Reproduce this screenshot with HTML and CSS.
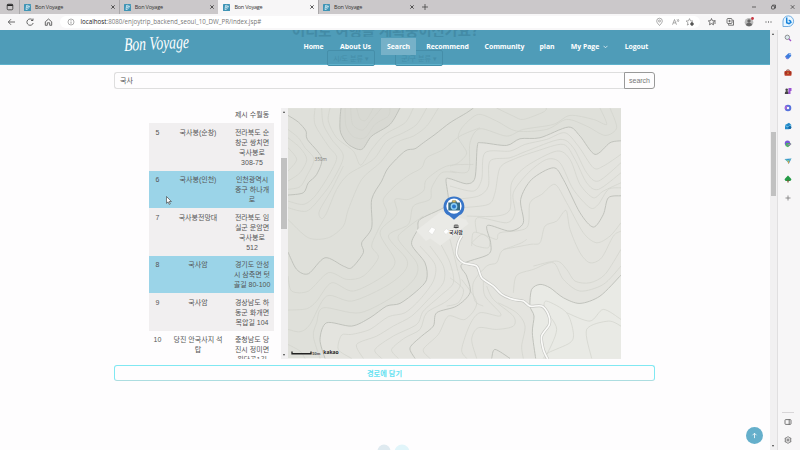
FILE: index.html
```html
<!DOCTYPE html>
<html lang="ko">
<head>
<meta charset="utf-8">
<title>Bon Voyage</title>
<link rel="stylesheet" href="styles.css">
</head>
<body>
<svg width="0" height="0" class="defs">
  <symbol id="fav" viewBox="0 0 7 7"><rect width="7" height="7" rx=".6" fill="#3f94b5"/><path d="M2.6 1.2 2 5.7M2.6 1.5C4.6.7 4.6 3 2.6 3.3 5 3 4.7 5.8 2 5.5M4.4 1.5 4.9 3.5 5.8 1.7" fill="none" stroke="#e4f4fa" stroke-width=".7"/></symbol>
  <symbol id="close" viewBox="0 0 6 6"><path d="m1.3 1.3 3.4 3.4m0-3.4L1.3 4.7" stroke="#333" stroke-width=".8"/></symbol>
</svg>
<div class="tabs">
  <svg class="workspaces" viewBox="0 0 8 8"><rect x="1.2" y="1.2" width="5.6" height="5.6" rx="1" fill="none" stroke="#333" stroke-width=".8"/><path d="M1.2 2.2h5.6" stroke="#222" stroke-width="1.6"/></svg>
  <div class="tab"><svg class="fav"><use href="#fav"/></svg><span>Bon Voyage</span><svg class="close"><use href="#close"/></svg></div>
  <div class="tab"><svg class="fav"><use href="#fav"/></svg><span>Bon Voyage</span><svg class="close"><use href="#close"/></svg></div>
  <div class="tab active"><svg class="fav"><use href="#fav"/></svg><span>Bon Voyage</span><svg class="close"><use href="#close"/></svg></div>
  <div class="tab"><svg class="fav"><use href="#fav"/></svg><span>Bon Voyage</span><svg class="close"><use href="#close"/></svg></div>
  <svg class="newtab" viewBox="0 0 8 8"><path d="M4 1v6M1 4h6" stroke="#333" stroke-width=".7"/></svg>
  <svg class="winctl" viewBox="0 0 46 8" fill="none" stroke="#333" stroke-width=".7"><path d="M2 4h4"/><rect x="21.5" y="3" width="3" height="3" rx=".5"/><path d="M22.5 2.8v-.7h3v3h-.8"/><path d="m40.8 2.2 3.6 3.6m0-3.6-3.6 3.6"/></svg>
</div>
<div class="toolbar">
  <svg class="navicons" viewBox="0 0 50 12" fill="none" stroke="#444" stroke-width=".8"><path d="M9 6H2.5M5 3.2 2.3 6 5 8.800"/><path d="M26.700 4.200A3.200 3.200 0 1 0 27.200 7M27 2.500v2h-2"/><path d="M39.300 5.800 42.500 3l3.200 2.800v3.500h-2V6.800h-2.400v2.500h-2z"/></svg>
  <div class="address">
    <svg viewBox="0 0 8 8" class="info"><circle cx="4" cy="4" r="3" fill="none" stroke="#777" stroke-width=".6"/><path d="M4 3.500v2.200M4 2.200v.7" stroke="#777" stroke-width=".7"/></svg>
    <span class="url"><b>localhost</b>:8080/enjoytrip_backend_seoul_10_DW_PR/index.jsp#</span>
    <svg class="addricons" viewBox="0 0 42 10" fill="none" stroke="#888" stroke-width=".7"><path d="M6.500 8.500C4.500 6.300 3.700 5.200 3.700 4a2.800 2.800 0 0 1 5.600 0c0 1.200-.8 2.300-2.800 4.500z"/><circle cx="6.500" cy="4" r="1"/><path d="m19.500 7.700 2-5.200 2 5.200m-3.300-1.800h2.600M24 2.500q1 1 0 2M25 2q1.500 1.500 0 3"/><path d="m36.500 1.600 1 2.200 2.300.2-1.700 1.500M36.500 1.600l-1 2.200-2.400.2 1.800 1.600-.6 2.500 1.700-1"/><circle cx="39" cy="7" r="1.400" fill="#555" stroke="#555"/></svg>
  </div>
  <svg class="toolicons" viewBox="0 0 66 12" fill="none" stroke="#555" stroke-width=".8"><path d="m5.500 2.500.9 2.200 2.300.2-1.700 1.600.5 2.300-2-1.200-2 1.200.5-2.300-1.700-1.600 2.300-.2zM8 5h2M7.500 7h2.500"/><rect x="21" y="2.500" width="5" height="5" rx="1"/><path d="M22.500 8.200v1h5V4.300h-1M22.300 5h2.500m-1.200-1.200v2.500"/><circle cx="43" cy="6.300" r="4.300" fill="#bbb" stroke="none"/><circle cx="43" cy="5" r="1.700" fill="#666" stroke="none"/><path d="M40 9c0-3 6-3 6 0q-3 2.500-6 0" fill="#666" stroke="none"/><circle cx="46.500" cy="2.500" r="1.400" fill="#c63740" stroke="none"/><path d="M59.500 6h1M62 6h1M64.500 6h1" stroke="#333" stroke-width="1"/></svg>
</div>
<div class="shell">
  <main class="page">
    <header class="hero">
      <div class="logo">Bon Voyage</div>
      <nav class="menu">
        <a>Home</a><a>About Us</a><a class="on"><span>Search</span></a><a>Recommend</a><a>Community</a><a>plan</a><a>My Page <svg viewBox="0 0 5 4"><path d="m.5.8 2 2 2-2" fill="none" stroke="#fff" stroke-width=".7"/></svg></a><a>Logout</a>
      </nav>
      <div class="ghost-title">어디로 여행을 계획중이신가요?</div>
      <div class="ghost-selects"><span>시/도 분류 ▾</span><span>군/구 분류 ▾</span></div>
    </header>
    <form class="search"><div class="field">국사</div><div class="go">search</div></form>
    <section class="results">
      <div class="list">
        <div class="row first"><span></span><span></span><span>제시 수월동</span></div>
        <div class="row grey"><span>5</span><span>국사봉(순창)</span><span>전라북도 순<br>창군 쌍치면<br>국사봉로<br>308-75</span></div>
        <div class="row blue"><span>6</span><span>국사봉(인천)</span><span>인천광역시<br>중구 하나개<br>로</span></div>
        <div class="row grey"><span>7</span><span>국사봉전망대</span><span>전라북도 임<br>실군 운암면<br>국사봉로<br>512</span></div>
        <div class="row blue"><span>8</span><span>국사암</span><span>경기도 안성<br>시 삼죽면 텃<br>골길 80-100</span></div>
        <div class="row grey"><span>9</span><span>국사암</span><span>경상남도 하<br>동군 화개면<br>목압길 104</span></div>
        <div class="row"><span>10</span><span>당진 안국사지 석<br>탑</span><span>충청남도 당<br>진시 정미면<br>원당골1길</span></div>
      </div>
      <div class="bar listbar"><i class="up"></i><div class="thumb"></div><i class="down"></i></div>
      <svg class="map" viewBox="24 26 999 751">
        <rect x="24" y="26" width="999" height="751" fill="#dfe0da"/>
        <g id="areas"></g><g id="minor"></g><g id="major"></g>
        <path d="m408 394 75-58 75 25 8 12-85 66-30-22-13 8z" fill="#eaeae6"/>
        <g fill="#fff" stroke="#cfcfca"><path d="m445 396 10-13 12 6-10 17z"/><path d="m490 397 9-9 9 7-10 10z"/></g>
        <g id="road"></g>
        <path d="M507 348c-25-8-22-57 15-57s40 49 15 57l-15 13z" fill="#3976c9"/><circle cx="522" cy="320" r="23" fill="#fff"/>
        <path d="M505 309h9l3-6h11l3 6h9v24h-35z" fill="#356b85"/><path d="M517 303h10v6h-10z" fill="#d8b458"/><circle cx="522" cy="321" r="10" fill="#8fd0f5"/><circle cx="522" cy="321" r="6" fill="#2875c8"/>
        <path d="M523 377h11v7h-11zm-2 7h15M528 376v11" fill="none" stroke="#333" stroke-width="2"/>
        <text x="528" y="405" class="place">국사암</text>
        <text x="122" y="185" class="elev">350m</text>
        <path d="M36 756v7h57v-7" fill="none" stroke="#222" stroke-width="4"/>
        <text x="109" y="767" class="scale">50m</text><text x="153" y="765" class="brand">kakao</text>
      </svg>
    </section>
    <div class="add">경로에 담기</div>
    <div class="foot">
      <svg class="loader" viewBox="0 0 34 6"><circle cx="8" cy="7" r="6.500" fill="#dfeaf0"/><circle cx="26" cy="8" r="7.500" fill="#e1f5fa"/></svg>
      <div class="totop"><svg viewBox="0 0 8 8"><path d="M4 7V1.500M1.700 3.700 4 1.400l2.300 2.300" fill="none" stroke="#fff" stroke-width=".9"/></svg></div>
    </div>
  </main>
  <div class="bar pagebar"><i class="up"></i><div class="thumb"></div><i class="down"></i></div>
  <aside class="side">
    <svg class="bing" viewBox="0 0 14 14"><path d="M2 12.500V7a5.300 5.300 0 1 1 5.300 5.500z" fill="#e9f6ff" stroke="#62a4dc" stroke-width=".9"/><path d="M5.700 3.500v5.300L8 9.700l2-1.300c0-1.400-1.200-1.900-2.300-2.200" fill="none" stroke="#1683dc" stroke-width="1.500"/></svg>
    <svg viewBox="0 0 8 8"><circle cx="3.300" cy="3.300" r="2.200" fill="#dceaf2" stroke="#777" stroke-width=".8"/><path d="m5 5 2 2" stroke="#a14fc8" stroke-width="1.300"/></svg>
    <svg viewBox="0 0 8 8"><path d="m1 4.500 3.500-3.300 2.500.3.200 2.500L4 7.200z" fill="#3f7ddd"/><path d="m1 4.500 3 2.700-1.500-.2z" fill="#7953ce"/><circle cx="6" cy="2.500" r=".6" fill="#fff"/></svg>
    <svg viewBox="0 0 8 8"><path d="M2.800 2V1h2.400v1" fill="none" stroke="#7c3223" stroke-width=".8"/><rect x=".5" y="2" width="7" height="4.800" rx=".8" fill="#bd3b26"/><path d="M.5 4h7" stroke="#792519" stroke-width=".7"/><path d="M3.500 3.600h1v1.200h-1z" fill="#f3ca64"/></svg>
    <svg viewBox="0 0 8 8"><circle cx="2.700" cy="2.800" r="1.300" fill="#444"/><path d="M.8 7q0-3 2-3t2 3z" fill="#444"/><path d="M4.500 1h3v3h-1v3H4.300z" fill="#9b52d2"/></svg>
    <svg viewBox="0 0 8 8"><circle cx="4" cy="4" r="2.300" fill="none" stroke="#5672dc" stroke-width="2"/><path d="M2 5.400A2.400 2.400 0 0 1 3 2" fill="none" stroke="#a961d8" stroke-width="1.800"/></svg>
    <svg viewBox="0 0 8 8"><path d="M1 3 5 .7l2.200 2V6L5 7.300H1z" fill="#248ac9"/><path d="M1 3.500 4 5l3-2" stroke="#9bdcf5" stroke-width=".7" fill="none"/><circle cx="5.800" cy="5.500" r="1.500" fill="#1467a5"/></svg>
    <svg viewBox="0 0 8 8"><circle cx="3.500" cy="3.300" r="2.700" fill="#7659d8"/><path d="M2 3h4l1.500 1L4 7.300 1.500 6z" fill="#49ad63"/><path d="m3.500 5 3.500-1" stroke="#b967d1"/></svg>
    <svg viewBox="0 0 8 8"><path d="m.5 2 7-.5L4.700 7 3.500 4.700z" fill="#3495d4"/><path d="m.8 2 3.500 1.200L7.500 1.500 4 5z" fill="#7bc7a5"/><path d="m3.500 4.500 2-.5-.8 3z" fill="#e2a43e"/></svg>
    <svg viewBox="0 0 8 8"><path d="m4 .5 1.700 1.700 1.800 2L6.400 6H1.600L.5 4.200l1.800-2z" fill="#239a45"/><path d="M4 5v2.500" stroke="#79512c" stroke-width="1.200"/></svg>
    <svg viewBox="0 0 8 8"><path d="M4 1.500v5M1.500 4h5" stroke="#777" stroke-width=".8"/></svg>
    <div class="sep"></div>
    <svg viewBox="0 0 8 8"><rect x="1" y="1.600" width="6" height="4.800" rx=".8" fill="none" stroke="#444" stroke-width=".7"/><path d="M5.200 1.600v4.800" stroke="#444" stroke-width=".7"/></svg>
    <svg class="gear" viewBox="0 0 8 8" fill="none" stroke="#444" stroke-width=".7"><path d="m4 .5 1.100 1.200 1.900.6-.4 1.700.4 1.700-1.900.6L4 7.500 2.900 6.300 1 5.700 1.400 4 1 2.300l1.900-.6z"/><circle cx="4" cy="4" r="1.100"/></svg>
  </aside>
</div>
<svg class="cursor" viewBox="0 0 6 9"><path d="M.5.500v6.800l1.600-1.400 1.100 2.500 1.100-.5-1.100-2.400h2.200z" fill="#fff" stroke="#333" stroke-width=".6"/></svg>
<script src="map.js"></script>
</body>
</html>
```

FILE: styles.css
```css
* { box-sizing: border-box; }
body { margin: 0; width: 800px; height: 450px; overflow: hidden; background: #fefdfe; font-family: "Liberation Sans", "Noto Sans CJK KR", sans-serif; color: #555; }
svg { display: block; flex: none; }
.defs { position: absolute; }
.tabs { display: flex; height: 14px; background: #cbc8ca; align-items: center; }
.workspaces { width: 8px; height: 8px; margin: 0 5px 0 6px; }
.tab { width: 99.7px; height: 14px; display: flex; align-items: center; padding: 0 3px 0 4px; border-left: 1px solid #aaa8aa; font: 6px "Open Sans", sans-serif; color: #333; }
.tab.active { background: #f7f6f7; border-left-color: #f7f6f7; }
.tab span { margin-left: 4px; flex: 1; font-size: 5.5px; letter-spacing: -.35px; }
.tab span { letter-spacing: -.2px; }
.fav { width: 7px; height: 7px; }
.close { width: 6px; height: 6px; }
.newtab { width: 8px; height: 8px; margin-left: 3px; }
.winctl { width: 46px; height: 8px; margin-left: auto; margin-right: 2px; transform: translateX(-2px); }
.toolbar { height: 15.500px; display: flex; align-items: center; background: #f8f7f8; }
.navicons { width: 50px; height: 12px; margin: 0 4px 0 6px; }
.address { width: 640px; height: 12px; background: #fff; border-radius: 6px; display: flex; align-items: center; padding: 0 5px 0 7px; }
.info { width: 8px; height: 8px; }
.url { margin-left: 5.500px; font: 6.200px "Open Sans", sans-serif; color: #777; letter-spacing: .01px; }
.url b { font-weight: 400; color: #222; }
.addricons { width: 42px; height: 10px; margin-left: auto; }
.toolicons { width: 66px; height: 12px; margin-left: 6px; }
.shell { display: flex; height: 420.500px; }
.page { width: 769.500px; background: #fefdfe; display: flex; flex-direction: column; }
.hero { position: relative; height: 35.500px; background: #4f9cb8; display: flex; align-items: center; flex: none; border-bottom: 1px solid #5fb2cc; }
.logo { width: 171px; margin-left: 124px; color: #fff; font: italic 19px "Liberation Serif", serif; white-space: nowrap; transform: translateY(-2px) scaleX(.72) rotate(-2deg); transform-origin: left center; }
.menu { display: grid; grid-template-columns: 37px 47px 39px 59px 55px 30px 55px 39px; align-items: center; z-index: 1; }
.menu a { height: 17px; display: flex; align-items: center; justify-content: center; color: #fff; font: 700 6.900px "Open Sans", sans-serif; white-space: nowrap; letter-spacing: -.05px; }
.menu .on span { width: 35px; height: 17px; line-height: 17px; text-align: center; background: #76b1c8; }
.menu svg { width: 5px; height: 4px; margin-left: 4px; }
.ghost-title { position: absolute; left: 292px; top: 0; width: 190px; height: 7px; overflow: hidden; font: 700 14.300px/0 "Noto Sans CJK KR", sans-serif; color: #438ba6; white-space: nowrap; }
.ghost-selects { position: absolute; left: 327px; top: 20px; display: flex; gap: 20px; }
.ghost-selects span { width: 48px; height: 16px; border: 1px solid #458ea9; border-radius: 2px; color: #458ea9; font-size: 7px; line-height: 15px; text-align: center; }
.search { display: flex; margin: 7px 0 0 114px; width: 541px; height: 17px; flex: none; }
.field { flex: 1; border: 1px solid #dedede; border-right: 0; border-radius: 3px 0 0 3px; padding-left: 5px; font-size: 7px; line-height: 15px; }
.go { width: 31px; border: 1px solid #999; border-radius: 0 3px 3px 0; font-size: 7px; line-height: 15px; text-align: center; color: #777; }
.results { display: flex; height: 250.500px; margin: 19px 0 0 149px; flex: none; }
.list { width: 125px; overflow: hidden; }
.row { display: grid; grid-template-columns: 17px 64px 44px; font-size: 7px; line-height: 10px; text-align: center; padding: 4.600px 0 2.900px; white-space: nowrap; }
.row.first { height: 15.300px; padding-top: 2px; }
.grey { background: #f1eff0; }
.blue { background: #9bd4e8; }
.bar { background: #f1f0f1; display: flex; flex-direction: column; align-items: center; }
.bar i { border: 1.700px solid transparent; width: 0; }
.bar .up { border-bottom: 2px solid #444; border-top: 0; margin-top: 3px; }
.bar .down { border-top: 2px solid #444; border-bottom: 0; margin: auto 0 3px; }
.thumb { background: #c1c1c1; }
.listbar { width: 7px; margin: 0 0 0 6.500px; }
.listbar .thumb { width: 5.500px; height: 71px; margin-top: 45px; }
.map { width: 333px; height: 250.500px; }
.place { font: 700 15px "Noto Sans CJK KR", sans-serif; text-anchor: middle; fill: #333; stroke: #fff; stroke-width: 2px; paint-order: stroke; }
.elev { font: 14px "Open Sans", sans-serif; text-anchor: middle; fill: #777; }
.scale { font: 700 12px "Liberation Sans", sans-serif; text-anchor: middle; fill: #444; }
.brand { font: 700 15px "Open Sans", sans-serif; text-anchor: middle; fill: #222; }
.add { margin: 6px 0 0 114px; width: 541px; height: 16.500px; flex: none; border: 1px solid #80e8f2; border-bottom-color: #acdde0; border-radius: 3px; text-align: center; font: 700 7.200px/14px "Noto Sans CJK KR", sans-serif; color: #64e2f1; }
.foot { flex: 1; display: flex; align-items: flex-end; }
.loader { width: 34px; height: 6px; margin-left: 376px; }
.totop { width: 17px; height: 17px; border-radius: 50%; background: #65afcb; margin: 0 6.500px 6px auto; display: grid; place-items: center; }
.totop svg { width: 7px; height: 7px; }
.pagebar { width: 7px; }
.pagebar .thumb { width: 5px; height: 64px; margin-top: 97px; }
.side { width: 23.500px; background: #f7f6f7; border-left: 1px solid #e0dfe0; display: flex; flex-direction: column; align-items: center; gap: 9.600px; padding: 0 1px 6px 0; }
.side svg { width: 8px; height: 8px; }
.side .bing { width: 14px; height: 14px; margin: -15.500px 0 -4.600px; }
.side .bing + svg { margin-top: 1px; }
.side .sep { width: 12px; height: 1px; margin-top: auto; margin-bottom: -4px; background: #d8d6d8; }
.side svg:nth-child(11) { margin-top: 1.500px; }
.cursor { position: absolute; left: 165.500px; top: 195.500px; width: 6px; height: 9px; }
```

FILE: map.js
```js
// Turns a list of points into a smooth Catmull-Rom path.
function curve(text) {
  const p = text.split(" ").map(s => s.split(",").map(Number));
  let d = "M" + p[0];
  for (let i = 0; i < p.length - 1; i++) {
    const a = p[i - 1] || p[i], b = p[i], c = p[i + 1], e = p[i + 2] || c;
    d += "C" + [b[0] + (c[0] - a[0]) / 7, b[1] + (c[1] - a[1]) / 7, c[0] - (e[0] - b[0]) / 7, c[1] - (e[1] - b[1]) / 7, c[0], c[1]];
  }
  return d;
}
function add(group, d, fill, stroke, width) {
  const el = document.createElementNS("http://www.w3.org/2000/svg", "path");
  el.setAttribute("d", d);
  el.setAttribute("fill", fill);
  el.setAttribute("stroke", stroke);
  el.setAttribute("stroke-width", width);
  document.getElementById(group).appendChild(el);
}
const peak = "183,26 180,60 182,100 205,135 245,150 275,110 330,75 360,26";
const slope = "135,777 120,720 140,670 215,680 270,655 320,620 360,612 410,575 440,540 435,490 395,435 413,390 420,360 490,325 505,300 498,242 510,238 560,253 585,235 592,140 605,130 680,138 720,118 780,115 865,83 900,110 945,165 990,130 1023,124";
const valley = "767,777 757,700 762,650 750,620 755,570 780,555 810,565 850,595 900,612 960,590 1023,527";
const major = [peak, slope, valley,
  "24,48 55,68 78,95 82,120 125,175 110,225 85,250 70,280 24,287",
  "580,26 560,40 510,70 465,105 430,130 405,148 375,155 325,205 305,245 275,300 275,385 245,430 250,460 215,505 190,500 135,475 85,523 50,510 24,458",
  "405,777 390,745 425,710 460,680 470,640 530,620 570,580 560,530 545,495 625,465 632,430 622,378 690,395 730,370 722,300 755,240 820,205 850,240 900,340 940,383 970,345 985,295 1023,289",
  "635,777 645,750 690,777"];
const minor = [
  "212,26 218,75 248,92 275,60 305,26", "230,26 240,58 258,62 280,26",
  "195,26 198,80 220,112 255,115 285,75 325,50 330,26",
  "150,26 145,65 170,115 220,155 242,197 275,150 315,105 375,70 400,26",
  "125,26 130,75 155,120 190,170 160,240 125,290 80,335 24,325",
  "105,26 105,75 145,140 170,175 145,230 105,290 70,315 24,305",
  "24,90 55,115 75,145 102,180 80,230 60,262 24,270",
  "24,115 60,145 80,180 60,220 24,245", "24,145 50,180 24,215",
  "440,26 410,75 370,100 320,125 280,180 205,225 170,270 140,340 125,358 118,335 155,270 190,200",
  "475,26 440,80 400,110 350,130 300,190 245,240 205,330 190,380 145,415 85,415 24,360",
  "600,85 540,110 490,150 440,175 425,205 390,225 350,255 310,300 320,340 295,390 275,440 295,475 250,530 200,540 145,520 85,575 35,575 24,530",
  "580,195 500,200 440,240 430,275 385,300 345,300 350,345 300,400 345,485 310,530 220,575 155,550 110,605 80,628 24,632",
  "530,220 485,220 455,265 450,300 400,320 385,375 325,410 380,480 370,520 310,565 215,605 140,590 90,675 60,697 24,690",
  "430,350 375,390 355,420 410,490 405,535 350,585 240,640 130,625 110,670 100,710 120,777",
  "24,735 60,755 75,777",
  "420,440 465,495 460,545 420,600 375,640 325,652 270,690 215,705 185,707 175,750 215,777",
  "450,440 490,500 490,550 445,600 395,650 340,680 290,710 230,735 250,777",
  "480,430 510,490 520,550 480,590 430,635 410,675 340,710 285,750 305,777",
  "510,420 530,500 540,560 500,605 440,640 420,690 375,715 335,750 355,777",
  "510,200 535,190 560,160 535,115 550,80 595,45 650,65 710,95 800,90 860,60 920,80 975,108 1010,85 990,26",
  "510,215 565,215 570,130 600,88 680,110 730,90 820,75 870,48 940,60 980,75 960,26",
  "650,26 700,50 730,60 790,38 800,26",
  "510,260 580,275 605,240 615,160 690,155 735,135 800,120 855,100 895,140 940,205 970,200 1023,165",
  "525,300 595,290 625,260 630,185 690,175 740,155 840,120 880,145 920,220 955,245 1023,190",
  "545,325 625,315 645,280 660,205 700,180 770,155 850,135 885,180 920,250 955,270 1023,220",
  "560,350 650,350 690,330 695,250 740,200 830,155 870,180 900,255 940,295 970,275 1023,250",
  "590,400 592,355 680,370 705,340 700,280 745,220 800,180 840,190 880,270 930,325 955,315 985,270 1023,265",
  "575,440 580,400 610,405 650,420 660,400 740,385 750,310 785,285 825,255 860,310 910,400 950,430 990,410 1023,370",
  "670,450 750,435 780,430 795,380 830,365 858,333 870,390 900,460 930,490 965,475 1000,410 1023,395",
  "740,420 725,430 700,440 665,455 650,490 620,500 580,550 585,605 610,620",
  "760,500 830,485 860,510 885,545 930,550 975,525 1023,450",
  "1023,500 970,555 900,575 850,540 820,490 760,510 710,528 700,580",
  "610,545 615,590 660,640 655,650 600,640 570,675 545,750 560,777",
  "620,560 640,600 700,650 700,680 650,690 595,685 575,720 590,777",
  "655,610 710,640 735,680 725,740 730,777", "545,540 590,610 555,660 505,650 475,705 430,750 450,777",
  "510,535 550,570 535,610 500,620",
  "575,430 605,405 628,420 625,445 590,440 575,430",
  "790,777 805,760 870,730 880,700 860,640 800,605 795,630 830,690 795,777",
  "860,640 930,665 970,630 1023,660", "935,777 920,690 985,665 1023,680"];
add("areas", curve(peak) + "Z", "#d8d9d3", "none", 0);
add("areas", curve(slope) + "L1023,777Z", "#e4e4df", "none", 0);
add("areas", curve(valley) + "L1023,777Z", "#e9eae5", "none", 0);
minor.forEach(m => add("minor", curve(m), "none", "#d1d2cc", 2.1));
major.forEach(m => add("major", curve(m), "none", "#bdbfb9", 2.8));
const road = curve("545,410 535,430 530,465 550,490 590,500 605,535 640,560 665,585 700,600 730,605 750,620 785,620 805,645 808,675 785,710 790,750 803,779");
add("road", road, "none", "#c6c7c3", 9);
add("road", road, "none", "#fafaf8", 5);
```
